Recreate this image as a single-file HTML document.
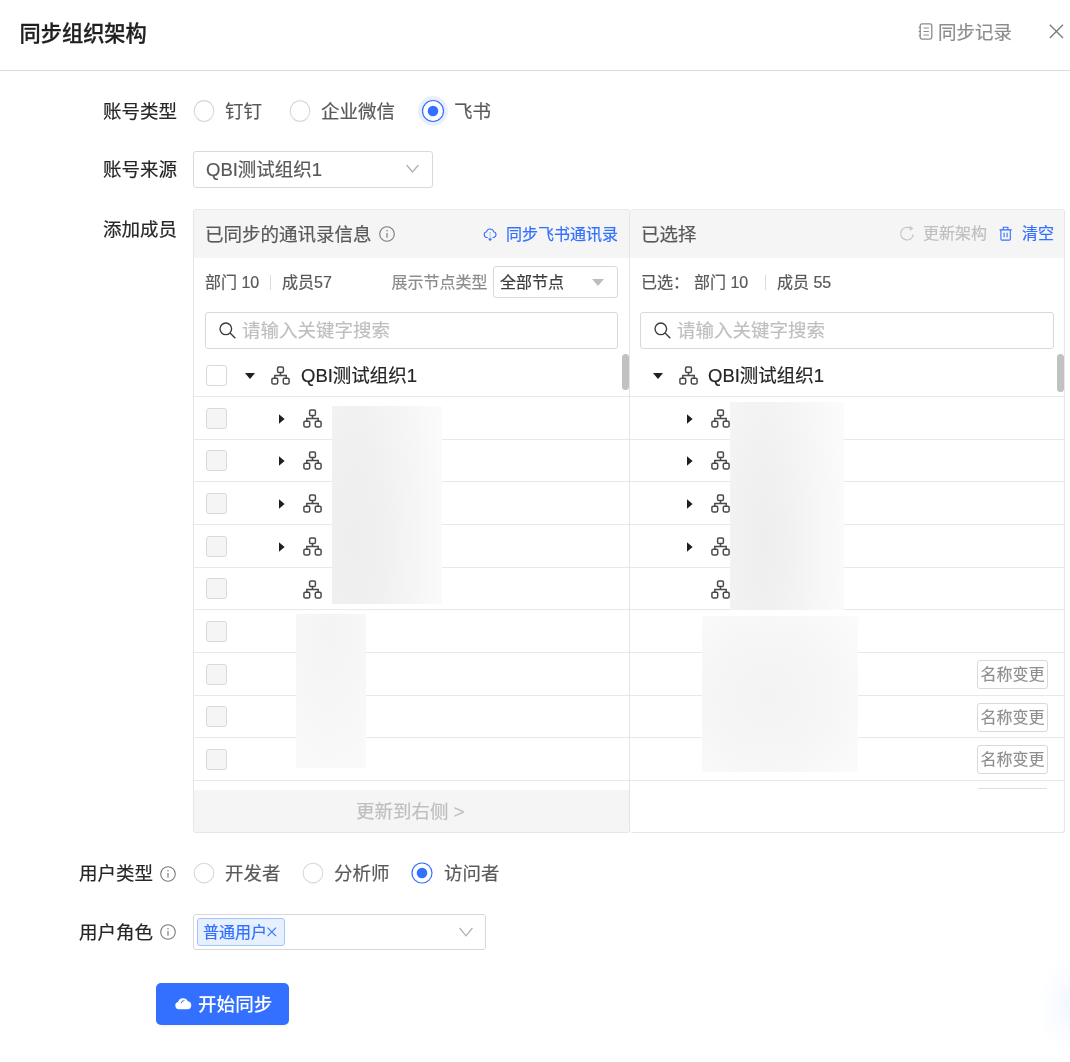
<!DOCTYPE html>
<html lang="zh-CN">
<head>
<meta charset="utf-8">
<title>同步组织架构</title>
<style>
*{box-sizing:border-box;margin:0;padding:0}
html,body{width:1070px;height:1062px;background:#fff;overflow:hidden}
body{font-family:"Liberation Sans","Noto Sans CJK SC",sans-serif;font-size:18.5px;color:#262626;-webkit-font-smoothing:antialiased}
#app{position:relative;width:1070px;height:1062px;overflow:hidden;will-change:transform}
.a{position:absolute;white-space:nowrap}
.t{position:absolute;white-space:nowrap;height:28px;line-height:28px;font-size:18.5px;-webkit-text-stroke:0.2px}
.s{position:absolute;white-space:nowrap;height:24px;line-height:24px;font-size:16px;-webkit-text-stroke:0.2px}
svg{position:absolute;display:block;overflow:visible}
.c1{color:#262626}.c2{color:#595959}.c3{color:#8c8c8c}.c4{color:#bfbfbf}.cb{color:#3370ff}
.box{position:absolute;border:1px solid #d9d9d9;border-radius:3px;background:#fff}
.cbx{position:absolute;left:206px;width:21px;height:21px;border:1px solid #d9d9d9;border-radius:3px;background:#f5f5f5}
.sep{position:absolute;height:1px;background:#e8e8e8}
.blur{position:absolute}
.tag{position:absolute;left:977px;width:71px;height:29px;border:1px solid #d9d9d9;border-radius:3px;background:#fff;color:#8f8f8f;font-size:16px;line-height:28px;text-align:center;white-space:nowrap;-webkit-text-stroke:0.150px}
</style>
</head>
<body>
<div id="app">

<!-- header -->
<div class="a" style="left:19.600px;top:19px;height:30px;line-height:30px;font-size:21.200px;font-weight:500;color:#1f1f1f;-webkit-text-stroke:0.3px #1f1f1f">同步组织架构</div>
<svg style="left:918px;top:23px" width="15" height="17" viewBox="0 0 15 17" fill="none" stroke="#8c8c8c" stroke-width="1.3"><rect x="2.2" y="0.9" width="11.6" height="15.2" rx="1.8"/><path d="M5.5 5h5.4M5.5 8.5h5.4M5.5 12h5.4" stroke-width="1.2"/><path d="M0.6 4.3h2.2M0.6 8.5h2.2M0.6 12.7h2.2" stroke-width="1.1"/></svg>
<div class="t c3" style="left:938px;top:19px">同步记录</div>
<svg style="left:1049px;top:24px" width="15" height="15" viewBox="0 0 15 15" fill="none" stroke="#7a7a7a" stroke-width="1.3"><path d="M0.8 0.8l13.2 13.2M14 0.8L0.8 14"/></svg>
<div class="sep" style="left:0;top:70px;width:1070px;background:#dadada"></div>

<!-- row: account type -->
<div class="t c1" style="left:103px;top:98px">账号类型</div>
<svg style="left:188.75px;top:96.00px" width="30" height="30" viewBox="0 0 30 30"><ellipse cx="15" cy="15" rx="9.80" ry="10.40" fill="#fff" stroke="#d6d6d6" stroke-width="1.050"/></svg>
<div class="t c2" style="left:225px;top:98px">钉钉</div>
<svg style="left:284.65px;top:95.90px" width="30" height="30" viewBox="0 0 30 30"><ellipse cx="15" cy="15" rx="9.80" ry="10.30" fill="#fff" stroke="#d6d6d6" stroke-width="1.050"/></svg>
<div class="t c2" style="left:321px;top:98px">企业微信</div>
<svg style="left:417.95px;top:95.85px" width="30" height="30" viewBox="0 0 30 30"><circle cx="15" cy="15" r="14.900" fill="#3370ff" fill-opacity=".11"/><ellipse cx="15" cy="15" rx="10.50" ry="10.50" fill="#fff" stroke="#3370ff" stroke-width="1.180"/><circle cx="15" cy="15" r="5.300" fill="#3370ff"/></svg>
<div class="t c2" style="left:454px;top:98px">飞书</div>

<!-- row: account source -->
<div class="t c1" style="left:103px;top:156px">账号来源</div>
<div class="box" style="left:193px;top:151px;width:240px;height:37px"></div>
<div class="t c2" style="left:206px;top:156px">QBI测试组织1</div>
<svg style="left:406.400px;top:164.200px" width="13" height="9" viewBox="0 0 13 9" fill="none" stroke="#b0b0b0" stroke-width="1.3"><path d="M0.6 1l5.9 7 5.9-7"/></svg>

<!-- row: add members -->
<div class="t c1" style="left:103px;top:216px">添加成员</div>

<!-- panels -->
<div class="a" style="left:193px;top:209px;width:437px;height:624px;border:1px solid #e6e6e6;border-top-color:#eaeaea;border-radius:3px;background:#fff"></div>
<div class="a" style="left:630px;top:209px;width:435px;height:624px;border:1px solid #e6e6e6;border-top-color:#eaeaea;border-left:0;border-radius:3px;background:#fff"></div>
<div class="a" style="left:194px;top:210px;width:435px;height:48px;background:#f5f5f5"></div>
<div class="a" style="left:630px;top:210px;width:434px;height:48px;background:#f5f5f5"></div>

<!-- left header -->
<div class="t c2" style="left:205px;top:221px">已同步的通讯录信息</div>
<svg style="left:379.400px;top:226.400px" width="16" height="16" viewBox="0 0 16 16" fill="none" stroke="#7a7a7a" stroke-width="1.1"><circle cx="8" cy="8" r="7.300"/><path d="M8 6.900v4.900" stroke-width="1.150"/><circle cx="8" cy="4.700" r="0.750" fill="#7a7a7a" stroke="none"/></svg>
<svg style="left:483px;top:227.500px" width="14" height="14" viewBox="0 0 14 14" fill="none" stroke="#3370ff" stroke-width="1.05"><path d="M4.700 9.400H3.500A2.900 2.900 0 0 1 3.600 3.700 3.600 3.600 0 0 1 10.600 3.700 2.900 2.900 0 0 1 10.700 9.400H9.500"/><path d="M7.100 4.300V10.800" stroke-dasharray="1.100 1" stroke-opacity=".75"/><path d="M5 10.600L7.100 13.300 9.200 10.600z" fill="#3370ff" stroke="none"/></svg>
<div class="s cb" style="left:506px;top:223px">同步飞书通讯录</div>

<!-- right header -->
<div class="t c2" style="left:641px;top:221px">已选择</div>
<svg style="left:900px;top:225.800px" width="15" height="15" viewBox="0 0 15 15" fill="none" stroke="#c2c2c2" stroke-width="1.150"><path d="M13.300 8.400A6.300 6.300 0 1 1 10.700 2.500"/><path d="M9.800 0.400l2.600 2.100-2.700 1.700" stroke-width="1.050"/></svg>
<div class="s c4" style="left:923px;top:222px">更新架构</div>
<svg style="left:999.300px;top:225.600px" width="14" height="15" viewBox="0 0 14 15" fill="none" stroke="#3370ff" stroke-width="1.100"><path d="M0.500 3.900h12.200M4.300 3.700V1.300h4.600v2.400M1.900 4.100v9.100a0.900 0.900 0 0 0 0.900 0.900h7.600a0.900 0.900 0 0 0 0.900-0.900V4.100M5.100 6.700v4.600M8.100 6.700v4.600"/></svg>
<div class="s cb" style="left:1022px;top:222px">清空</div>

<!-- left stats -->
<div class="s c2" style="left:205px;top:271px">部门 10</div>
<div class="a" style="left:270px;top:275px;width:1px;height:15px;background:#dcdcdc"></div>
<div class="s c2" style="left:282px;top:271px">成员57</div>
<div class="s c3" style="left:391.500px;top:271px">展示节点类型</div>
<div class="box" style="left:493px;top:266px;width:125px;height:32px"></div>
<div class="s" style="left:500px;top:271px;color:#3d3d3d">全部节点</div>
<svg style="left:592px;top:279px" width="12" height="7" viewBox="0 0 12 7"><path d="M0 0h12L6 7z" fill="#bdbdbd"/></svg>

<!-- right stats -->
<div class="s c2" style="left:641px;top:271px">已选：</div>
<div class="s c2" style="left:694px;top:271px">部门 10</div>
<div class="a" style="left:765px;top:275px;width:1px;height:15px;background:#dcdcdc"></div>
<div class="s c2" style="left:777px;top:271px">成员 55</div>

<!-- search boxes -->
<div class="box" style="left:205px;top:312px;width:413px;height:37px"></div>
<svg style="left:219px;top:322px" width="17" height="17" viewBox="0 0 17 17" fill="none" stroke="#3a3a3a" stroke-width="1.35"><circle cx="6.800" cy="6.800" r="5.800"/><path d="M11.100 11.100l5.200 5.200"/></svg>
<div class="t c4" style="left:242px;top:317px">请输入关键字搜索</div>
<div class="box" style="left:640px;top:312px;width:414px;height:37px"></div>
<svg style="left:654px;top:322px" width="17" height="17" viewBox="0 0 17 17" fill="none" stroke="#3a3a3a" stroke-width="1.35"><circle cx="6.800" cy="6.800" r="5.800"/><path d="M11.100 11.100l5.200 5.200"/></svg>
<div class="t c4" style="left:677px;top:317px">请输入关键字搜索</div>

<!-- TREE-LEFT -->
<div class="sep" style="left:194px;top:396px;width:870px"></div>
<div class="sep" style="left:194px;top:439px;width:870px"></div>
<div class="sep" style="left:194px;top:481px;width:870px"></div>
<div class="sep" style="left:194px;top:524px;width:870px"></div>
<div class="sep" style="left:194px;top:567px;width:870px"></div>
<div class="sep" style="left:194px;top:609px;width:870px"></div>
<div class="sep" style="left:194px;top:652px;width:870px"></div>
<div class="sep" style="left:194px;top:695px;width:870px"></div>
<div class="sep" style="left:194px;top:737px;width:870px"></div>
<div class="sep" style="left:194px;top:780px;width:870px"></div>
<div class="cbx" style="top:365px;background:#fff"></div>
<svg style="left:245px;top:373px" width="10" height="6" viewBox="0 0 10 6"><path d="M0 0h10L5 6z" fill="#1f1f1f"/></svg>
<svg style="left:271px;top:366px" width="19" height="19" viewBox="0 0 19 19" fill="none" stroke="#4a4a4a" stroke-width="1.5"><rect x="6.600" y="0.900" width="5.800" height="5.600" rx="1.300"/><rect x="0.900" y="12.300" width="5.800" height="5.600" rx="1.300"/><rect x="12.300" y="12.300" width="5.800" height="5.600" rx="1.300"/><path d="M9.500 6.500v3M3.800 12.300V9.500h11.400v2.800"/></svg>
<div class="t c1" style="left:301px;top:362px">QBI测试组织1</div>
<div class="cbx" style="top:408px"></div>
<svg style="left:279px;top:413.9px" width="6" height="10" viewBox="0 0 6 10"><path d="M0 0.300v9.400l5.600-4.700z" fill="#1f1f1f"/></svg>
<svg style="left:303px;top:409.3px" width="19" height="19" viewBox="0 0 19 19" fill="none" stroke="#4a4a4a" stroke-width="1.5"><rect x="6.600" y="0.900" width="5.800" height="5.600" rx="1.300"/><rect x="0.900" y="12.300" width="5.800" height="5.600" rx="1.300"/><rect x="12.300" y="12.300" width="5.800" height="5.600" rx="1.300"/><path d="M9.500 6.500v3M3.800 12.300V9.500h11.400v2.800"/></svg>
<div class="cbx" style="top:450px"></div>
<svg style="left:279px;top:455.75px" width="6" height="10" viewBox="0 0 6 10"><path d="M0 0.300v9.400l5.600-4.700z" fill="#1f1f1f"/></svg>
<svg style="left:303px;top:451.4px" width="19" height="19" viewBox="0 0 19 19" fill="none" stroke="#4a4a4a" stroke-width="1.5"><rect x="6.600" y="0.900" width="5.800" height="5.600" rx="1.300"/><rect x="0.900" y="12.300" width="5.800" height="5.600" rx="1.300"/><rect x="12.300" y="12.300" width="5.800" height="5.600" rx="1.300"/><path d="M9.500 6.500v3M3.800 12.300V9.500h11.400v2.800"/></svg>
<div class="cbx" style="top:493px"></div>
<svg style="left:279px;top:498.65px" width="6" height="10" viewBox="0 0 6 10"><path d="M0 0.300v9.400l5.600-4.700z" fill="#1f1f1f"/></svg>
<svg style="left:303px;top:494px" width="19" height="19" viewBox="0 0 19 19" fill="none" stroke="#4a4a4a" stroke-width="1.5"><rect x="6.600" y="0.900" width="5.800" height="5.600" rx="1.300"/><rect x="0.900" y="12.300" width="5.800" height="5.600" rx="1.300"/><rect x="12.300" y="12.300" width="5.800" height="5.600" rx="1.300"/><path d="M9.500 6.500v3M3.800 12.300V9.500h11.400v2.800"/></svg>
<div class="cbx" style="top:536px"></div>
<svg style="left:279px;top:542px" width="6" height="10" viewBox="0 0 6 10"><path d="M0 0.300v9.400l5.600-4.700z" fill="#1f1f1f"/></svg>
<svg style="left:303px;top:536.9px" width="19" height="19" viewBox="0 0 19 19" fill="none" stroke="#4a4a4a" stroke-width="1.5"><rect x="6.600" y="0.900" width="5.800" height="5.600" rx="1.300"/><rect x="0.900" y="12.300" width="5.800" height="5.600" rx="1.300"/><rect x="12.300" y="12.300" width="5.800" height="5.600" rx="1.300"/><path d="M9.500 6.500v3M3.800 12.300V9.500h11.400v2.800"/></svg>
<div class="cbx" style="top:578px"></div>
<svg style="left:303px;top:579.5px" width="19" height="19" viewBox="0 0 19 19" fill="none" stroke="#4a4a4a" stroke-width="1.5"><rect x="6.600" y="0.900" width="5.800" height="5.600" rx="1.300"/><rect x="0.900" y="12.300" width="5.800" height="5.600" rx="1.300"/><rect x="12.300" y="12.300" width="5.800" height="5.600" rx="1.300"/><path d="M9.500 6.500v3M3.800 12.300V9.500h11.400v2.800"/></svg>
<div class="cbx" style="top:621px"></div>
<div class="cbx" style="top:664px"></div>
<div class="cbx" style="top:706px"></div>
<div class="cbx" style="top:749px"></div>
<div class="blur" style="left:332px;top:406px;width:110px;height:198px;background:radial-gradient(ellipse 84% 170% at 20% 68%,#eeeeee 0%,#f0f0f0 30%,#f6f6f6 70%,#fbfbfb 100%)"></div>
<div class="blur" style="left:296px;top:614px;width:70px;height:154px;background:radial-gradient(ellipse 80% 90% at 48% 12%,#f4f4f4 0%,#f6f6f6 50%,#f9f9f9 100%)"></div>
<div class="a" style="left:622px;top:354px;width:7px;height:36px;border-radius:3.500px;background:#c1c1c1"></div>
<div class="a" style="left:629px;top:258px;width:1px;height:574px;background:#e4e4e4"></div>
<!-- /TREE-LEFT -->
<!-- TREE-RIGHT -->
<svg style="left:653px;top:373px" width="10" height="6" viewBox="0 0 10 6"><path d="M0 0h10L5 6z" fill="#1f1f1f"/></svg>
<svg style="left:679px;top:366px" width="19" height="19" viewBox="0 0 19 19" fill="none" stroke="#4a4a4a" stroke-width="1.5"><rect x="6.600" y="0.900" width="5.800" height="5.600" rx="1.300"/><rect x="0.900" y="12.300" width="5.800" height="5.600" rx="1.300"/><rect x="12.300" y="12.300" width="5.800" height="5.600" rx="1.300"/><path d="M9.500 6.500v3M3.800 12.300V9.500h11.400v2.800"/></svg>
<div class="t c1" style="left:708px;top:362px">QBI测试组织1</div>
<svg style="left:687px;top:413.9px" width="6" height="10" viewBox="0 0 6 10"><path d="M0 0.300v9.400l5.600-4.700z" fill="#1f1f1f"/></svg>
<svg style="left:711px;top:409.3px" width="19" height="19" viewBox="0 0 19 19" fill="none" stroke="#4a4a4a" stroke-width="1.5"><rect x="6.600" y="0.900" width="5.800" height="5.600" rx="1.300"/><rect x="0.900" y="12.300" width="5.800" height="5.600" rx="1.300"/><rect x="12.300" y="12.300" width="5.800" height="5.600" rx="1.300"/><path d="M9.500 6.500v3M3.800 12.300V9.500h11.400v2.800"/></svg>
<svg style="left:687px;top:455.75px" width="6" height="10" viewBox="0 0 6 10"><path d="M0 0.300v9.400l5.600-4.700z" fill="#1f1f1f"/></svg>
<svg style="left:711px;top:451.4px" width="19" height="19" viewBox="0 0 19 19" fill="none" stroke="#4a4a4a" stroke-width="1.5"><rect x="6.600" y="0.900" width="5.800" height="5.600" rx="1.300"/><rect x="0.900" y="12.300" width="5.800" height="5.600" rx="1.300"/><rect x="12.300" y="12.300" width="5.800" height="5.600" rx="1.300"/><path d="M9.500 6.500v3M3.800 12.300V9.500h11.400v2.800"/></svg>
<svg style="left:687px;top:498.65px" width="6" height="10" viewBox="0 0 6 10"><path d="M0 0.300v9.400l5.600-4.700z" fill="#1f1f1f"/></svg>
<svg style="left:711px;top:494px" width="19" height="19" viewBox="0 0 19 19" fill="none" stroke="#4a4a4a" stroke-width="1.5"><rect x="6.600" y="0.900" width="5.800" height="5.600" rx="1.300"/><rect x="0.900" y="12.300" width="5.800" height="5.600" rx="1.300"/><rect x="12.300" y="12.300" width="5.800" height="5.600" rx="1.300"/><path d="M9.500 6.500v3M3.800 12.300V9.500h11.400v2.800"/></svg>
<svg style="left:687px;top:542px" width="6" height="10" viewBox="0 0 6 10"><path d="M0 0.300v9.400l5.600-4.700z" fill="#1f1f1f"/></svg>
<svg style="left:711px;top:536.9px" width="19" height="19" viewBox="0 0 19 19" fill="none" stroke="#4a4a4a" stroke-width="1.5"><rect x="6.600" y="0.900" width="5.800" height="5.600" rx="1.300"/><rect x="0.900" y="12.300" width="5.800" height="5.600" rx="1.300"/><rect x="12.300" y="12.300" width="5.800" height="5.600" rx="1.300"/><path d="M9.500 6.500v3M3.800 12.300V9.500h11.400v2.800"/></svg>
<svg style="left:711px;top:579.5px" width="19" height="19" viewBox="0 0 19 19" fill="none" stroke="#4a4a4a" stroke-width="1.5"><rect x="6.600" y="0.900" width="5.800" height="5.600" rx="1.300"/><rect x="0.900" y="12.300" width="5.800" height="5.600" rx="1.300"/><rect x="12.300" y="12.300" width="5.800" height="5.600" rx="1.300"/><path d="M9.500 6.500v3M3.800 12.300V9.500h11.400v2.800"/></svg>
<div class="tag" style="top:660px">名称变更</div>
<div class="tag" style="top:703px">名称变更</div>
<div class="tag" style="top:745px">名称变更</div>
<div class="a" style="left:978px;top:788px;width:69px;height:1px;background:#dedede"></div>
<div class="blur" style="left:730px;top:402px;width:114px;height:208px;background:radial-gradient(ellipse 76% 150% at 28% 68%,#eeeeee 0%,#f1f1f1 30%,#f7f7f7 70%,#fbfbfb 100%)"></div>
<div class="blur" style="left:702px;top:616px;width:156px;height:156px;background:radial-gradient(ellipse 80% 80% at 42% 52%,#f3f3f3 0%,#f6f6f6 50%,#fcfcfc 100%)"></div>
<div class="a" style="left:1057px;top:354px;width:7px;height:38px;border-radius:3.500px;background:#c1c1c1"></div>
<!-- /TREE-RIGHT -->

<!-- footer left -->
<div class="a" style="left:194px;top:790px;width:435px;height:42px;background:#f5f5f5;border-radius:0 0 0 3px"></div>
<div class="t c4" style="left:356px;top:798px">更新到右侧 &gt;</div>

<!-- row: user type -->
<div class="t c1" style="left:79px;top:860px">用户类型</div>
<svg style="left:159.500px;top:865.500px" width="16" height="16" viewBox="0 0 16 16" fill="none" stroke="#7a7a7a" stroke-width="1.1"><circle cx="8" cy="8" r="7.300"/><path d="M8 6.900v4.900" stroke-width="1.150"/><circle cx="8" cy="4.700" r="0.750" fill="#7a7a7a" stroke="none"/></svg>
<svg style="left:188.65px;top:858.30px" width="30" height="30" viewBox="0 0 30 30"><ellipse cx="15" cy="15" rx="9.85" ry="9.85" fill="#fff" stroke="#d6d6d6" stroke-width="1.050"/></svg>
<div class="t c2" style="left:225px;top:860px">开发者</div>
<svg style="left:297.75px;top:858.30px" width="30" height="30" viewBox="0 0 30 30"><ellipse cx="15" cy="15" rx="9.85" ry="9.85" fill="#fff" stroke="#d6d6d6" stroke-width="1.050"/></svg>
<div class="t c2" style="left:334px;top:860px">分析师</div>
<svg style="left:407.40px;top:858.40px" width="30" height="30" viewBox="0 0 30 30"><ellipse cx="15" cy="15" rx="10.00" ry="10.00" fill="#fff" stroke="#3370ff" stroke-width="1.180"/><circle cx="15" cy="15" r="5.300" fill="#3370ff"/></svg>
<div class="t c2" style="left:444px;top:860px">访问者</div>

<!-- row: user role -->
<div class="t c1" style="left:79px;top:919px">用户角色</div>
<svg style="left:159.500px;top:924.300px" width="16" height="16" viewBox="0 0 16 16" fill="none" stroke="#7a7a7a" stroke-width="1.1"><circle cx="8" cy="8" r="7.300"/><path d="M8 6.900v4.900" stroke-width="1.150"/><circle cx="8" cy="4.700" r="0.750" fill="#7a7a7a" stroke="none"/></svg>
<div class="box" style="left:193px;top:914px;width:293px;height:36px"></div>
<div class="a" style="left:197px;top:918px;width:88px;height:28px;border:1px solid #a1c4ff;border-radius:3px;background:#e6f0ff"></div>
<div class="s cb" style="left:203px;top:921px">普通用户</div>
<svg style="left:267.400px;top:926.700px" width="9.600" height="9.600" viewBox="0 0 10 10" fill="none" stroke="#3370ff" stroke-width="1.150"><path d="M0.600 0.600l8.800 8.800M9.400 0.600L0.600 9.400"/></svg>
<svg style="left:459px;top:927px" width="14" height="10" viewBox="0 0 14 10" fill="none" stroke="#b0b0b0" stroke-width="1.3"><path d="M0.600 1l6.400 7.800L13.400 1"/></svg>

<!-- button -->
<div class="a" style="left:156px;top:983px;width:133px;height:42px;border-radius:5px;background:#3370ff;box-shadow:0 2px 2px rgba(0,0,0,.04)"></div>
<svg style="left:175px;top:997px" width="17" height="13" viewBox="0 0 17 13"><path d="M4 12.300a3.700 3.700 0 0 1-1-7.260A5.300 5.300 0 0 1 12.900 4.200a4.100 4.100 0 0 1-0.300 8.100z" fill="#fff"/><path d="M6.200 6.300A3.300 3.300 0 0 1 9.400 3.500" fill="none" stroke="#3370ff" stroke-width="1"/></svg>
<div class="t" style="left:198px;top:991px;color:#fff;font-weight:500;font-size:18.600px;-webkit-text-stroke:0">开始同步</div>

<!-- faint glow bottom-right -->
<div class="a" style="left:1020px;top:940px;width:50px;height:122px;background:radial-gradient(ellipse 34px 52px at 52px 66px, rgba(70,120,255,.075), rgba(70,120,255,.028) 50%, rgba(70,120,255,0) 100%)"></div>

</div>
</body>
</html>
